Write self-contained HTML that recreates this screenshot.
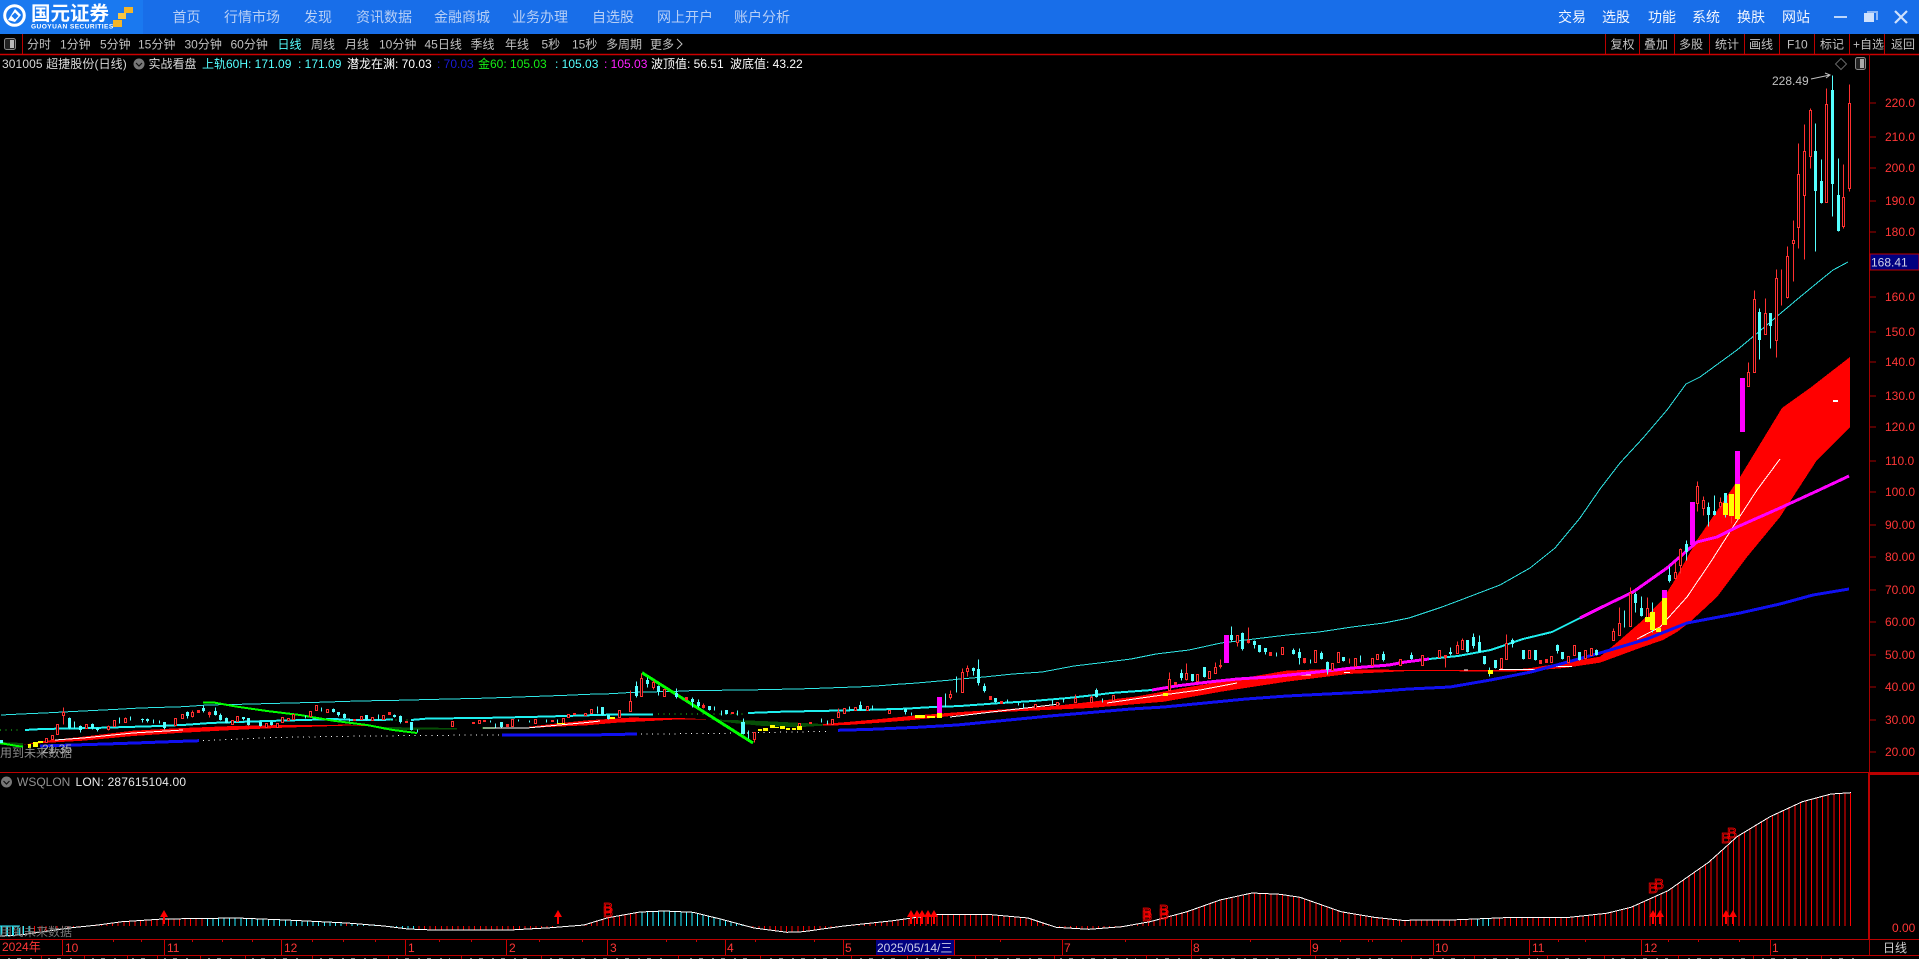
<!DOCTYPE html>
<html lang="zh-CN">
<head>
<meta charset="utf-8">
<title>国元证券</title>
<style>
html,body{margin:0;padding:0;background:#000;width:1919px;height:959px;overflow:hidden}
svg{display:block;position:absolute;left:0;top:0;font-family:"Liberation Sans","Noto Sans CJK SC",sans-serif;font-size:12px}
.m{font-size:14px;fill:#b7cff6}
.r{font-size:14px;fill:#f2f6fe}
.t{fill:#c0c0c0}
.a{fill:#ff3636}
.w{fill:#fff}
polyline,.cr{shape-rendering:crispEdges}
</style>
</head>
<body>
<svg width="1919" height="959" viewBox="0 0 1919 959" xmlns="http://www.w3.org/2000/svg">
<defs>
<clipPath id="hp"><path d="M0 936L20 935 41 932 69 928 98 925 122 921.7 163 919 237 918 286 920 347 923 384 926 408 929 433 930 510 930 551 927.7 584 925 608 917.7 640 912 664.5 911 693 912.3 721.6 919.3 754 928 787 932.3 803 931.7 844 926 893 920.7 938 914.3 987 914.3 1028 918 1056 927.3 1089 929.3 1122 926.7 1150 921.7 1187 911.7 1220 900 1252 893 1280 894.3 1300 897.3 1341 911.7 1374 917.3 1402 920.3 1451 920 1504.5 917.7 1566 917.7 1606.5 913.3 1631 907.3 1668 890.7 1708.6 862.3 1737 836.7 1770 816.7 1802.4 801.7 1831 794 1851 792.7V926H0z"/></clipPath>
<clipPath id="c1"><path d="M0 780H30V940H0zM204 780H345V940H204zM347 780H416V940H347zM640 780H752V940H640zM1474 780H1491V940H1474z"/></clipPath>
<path id="ar" fill="#f00" d="M-4 917L0 910 4 917H1V924H-1V917z"/>
</defs>

<!-- top bar -->
<rect width="1919" height="34" fill="#186ee9"/>
<rect width="143" height="34" fill="#1a79f0"/>
<circle cx="14.5" cy="15.5" r="9.8" fill="none" stroke="#fff" stroke-width="3"/>
<path d="M8 20L15 9 21 15 15 22z" fill="#fff"/>
<path d="M11.5 16l3.5-3.5 3.5 3.5-3.5 3.5z" fill="#1a79f0"/>
<text x="31" y="20" font-size="19.5" font-weight="700" fill="#fff">国元证券</text>
<text x="31" y="28.5" font-size="6.6" font-weight="700" fill="#fff" letter-spacing=".42">GUOYUAN SECURITIES</text>
<path d="M113 20h9v7h-9z" fill="#f4b528"/><path d="M118 13h8v6h-8z" fill="#f7c544"/><path d="M124 7h9v6h-9z" fill="#f4b528"/>
<text class="m" x="172.5" y="22">首页</text>
<text class="m" x="224" y="22">行情市场</text>
<text class="m" x="304" y="22">发现</text>
<text class="m" x="356" y="22">资讯数据</text>
<text class="m" x="434" y="22">金融商城</text>
<text class="m" x="512" y="22">业务办理</text>
<text class="m" x="592" y="22">自选股</text>
<text class="m" x="657" y="22">网上开户</text>
<text class="m" x="734" y="22">账户分析</text>
<text class="r" x="1558" y="22">交易</text>
<text class="r" x="1602" y="22">选股</text>
<text class="r" x="1648" y="22">功能</text>
<text class="r" x="1692" y="22">系统</text>
<text class="r" x="1737" y="22">换肤</text>
<text class="r" x="1782" y="22">网站</text>
<path d="M1834 16h13v2h-13z" fill="#bcd6fb"/>
<path d="M1864 13h10v9h-10z" fill="#cfe1fc"/><path d="M1867 11h11v9h-2v-7h-9z" fill="#8fb8f5"/>
<path d="M1895 11l12 12M1907 11l-12 12" stroke="#cfe1fc" stroke-width="2.2" fill="none"/>

<!-- toolbar -->
<g class="t">
<text x="27" y="48.5">分时</text><text x="60" y="48.5">1分钟</text><text x="100" y="48.5">5分钟</text><text x="138" y="48.5">15分钟</text><text x="184.5" y="48.5">30分钟</text><text x="230.5" y="48.5">60分钟</text>
<text x="277.5" y="48.5" style="fill:#55ffff">日线</text>
<text x="311" y="48.5">周线</text><text x="345" y="48.5">月线</text><text x="379" y="48.5">10分钟</text><text x="424.5" y="48.5">45日线</text><text x="470.5" y="48.5">季线</text><text x="505" y="48.5">年线</text><text x="541.5" y="48.5">5秒</text><text x="572" y="48.5">15秒</text><text x="606" y="48.5">多周期</text><text x="650" y="48.5">更多</text>
<text x="1610.5" y="48.5">复权</text><text x="1644" y="48.5">叠加</text><text x="1679" y="48.5">多股</text><text x="1715" y="48.5">统计</text><text x="1749" y="48.5">画线</text><text x="1787" y="48.5">F10</text><text x="1820" y="48.5">标记</text><text x="1853" y="48.5">+自选</text><text x="1891" y="48.5">返回</text>
</g>
<path d="M677 39l5 5-5 5" fill="none" stroke="#c0c0c0"/>
<rect x="4.5" y="38.5" width="11" height="11" rx="2" fill="#222" stroke="#888"/><rect x="10" y="40" width="4" height="8" fill="#bbb"/>
<path d="M22.5 34V54M1605.5 34V54M1639.5 34V54M1674.5 34V54M1709.5 34V54M1744.5 34V54M1779.5 34V54M1814.5 34V54M1849.5 34V54M1884.5 34V54" stroke="#b00" fill="none"/>
<path d="M0 54.5H1919" stroke="#c00" stroke-width="1.5"/>

<!-- info line -->
<text x="2" y="68" fill="#d8d8d8" letter-spacing=".1">301005 超捷股份(日线)</text>
<circle cx="139" cy="64" r="5.5" fill="#777"/><path d="M136 63l3 3 3-3" fill="none" stroke="#111" stroke-width="1.2"/>
<text x="148.5" y="68" fill="#d8d8d8">实战看盘</text>
<text x="202" y="68" fill="#55ffff">上轨60H: 171.09</text><text x="298" y="68" fill="#55ffff">: 171.09</text>
<text x="347" y="68" fill="#fff">潜龙在渊: 70.03</text><text x="437" y="68" fill="#1a1ad8">: 70.03</text>
<text x="478" y="68" fill="#16ee16">金60: 105.03</text><text x="555" y="68" fill="#55ffff">: 105.03</text><text x="604" y="68" fill="#ff22ff">: 105.03</text>
<text x="651" y="68" fill="#fff">波顶值: 56.51</text><text x="730" y="68" fill="#fff">波底值: 43.22</text>
<path d="M1841 58.5l5.5 5.5-5.5 5.5-5.5-5.5z" fill="none" stroke="#666"/>
<rect x="1855.5" y="57.5" width="10" height="12" rx="2" fill="#222" stroke="#888"/><rect x="1860" y="59" width="4" height="9" fill="#aaa"/>

<!-- axis frame -->
<path d="M1869.5 54V956" stroke="#a80000" fill="none"/>
<path d="M1869 773V940" stroke="#b00" stroke-width="2" fill="none"/>
<path d="M0 772.5H1919" stroke="#b00" fill="none"/>
<path d="M1869 774H1919" stroke="#b00" stroke-width="2" fill="none"/>
<path d="M0 939.5H1919M0 955.5H1919" stroke="#b00" fill="none"/>
<path d="M1870 103h6M1870 137h6M1870 168h6M1870 201h6M1870 232h6M1870 297h6M1870 332h6M1870 362h6M1870 396h6M1870 427h6M1870 461h6M1870 492h6M1870 525h6M1870 557h6M1870 590h6M1870 622h6M1870 655h6M1870 687h6M1870 720h6M1870 752h6" stroke="#a80000" fill="none"/>
<g class="a">
<text x="1885" y="107">220.0</text><text x="1885" y="141">210.0</text><text x="1885" y="172">200.0</text><text x="1885" y="205">190.0</text><text x="1885" y="236">180.0</text><text x="1885" y="301">160.0</text><text x="1885" y="336">150.0</text><text x="1885" y="366">140.0</text><text x="1885" y="400">130.0</text><text x="1885" y="431">120.0</text><text x="1885" y="465">110.0</text><text x="1885" y="496">100.0</text><text x="1885" y="529">90.00</text><text x="1885" y="561">80.00</text><text x="1885" y="594">70.00</text><text x="1885" y="626">60.00</text><text x="1885" y="659">50.00</text><text x="1885" y="691">40.00</text><text x="1885" y="724">30.00</text><text x="1885" y="756">20.00</text>
<text x="1892" y="932">0.00</text>
</g>
<rect x="1870" y="254" width="49" height="16" fill="#000080" stroke="#b00"/>
<text x="1871" y="266.5" fill="#d0d0e8">168.41</text>

<!-- bands -->
<path class="cr" fill="#f00" d="M23 745L43 741 83 736.7 133 730.7 183 728 233 726 283 725 350 724.7 380 726.3 350 725.5 283 727.7 233 730 183 732.7 133 736 83 740.7 43 743z"/>
<path class="cr" fill="#f00" d="M527 727L543 725 587 720.3 630 717.7 680 718 707 719.3 680 719.3 650 721 617 722.7 587 725.3 543 727.3z"/>
<path class="cr" fill="#f00" d="M823 724L847 722 880 719 913 715.7 960 712 1001 709.5 1054 706 1135 696.7 1189 687 1237 679 1286.5 670.7 1327 669 1409 670 1510 670 1531 668 1600 656.7 1620 640 1643 620 1662 600 1673 583 1697 540 1740 477 1782 408 1810 388 1850 357V427L1817 460 1780 517 1747 557 1717 597 1690 622 1677 632 1663 640 1640 648 1600 662.7 1564 668 1531 670.7 1510 671.5 1409 671 1348 674 1286.5 681.7 1221 691.7 1164 701.7 1090 708 1001 712 960 715 913 720 880 722.7 847 725 823 725.7z"/>
<path class="cr" fill="#064f06" d="M707 719.3L763 721 823 724V725.7L797 727.3 763 726 733 723zM383 727L457 728V729.5L383 730zM0 742L23 743V746L0 745zM482 727L495 727V729L482 729z"/>

<!-- white inner lines -->
<path class="cr" fill="none" stroke="#fff" d="M55 740L83 738 133 733 183 730M483 728H527L543 726.5 587 722.5 600 721M1107 703L1155 696 1200 690 1237 683M1295 675H1311M1344 672.7H1350M1464 670H1468M1499 669.6H1535M1550 666.7H1572M1637 639L1660 627 1687 597 1710 563 1733 527 1757 490 1780 459M950 717L1000 711 1060 704"/>

<!-- thin upper cyan -->
<polyline fill="none" stroke="#2fe6e6" points="1,715 21,714 44,713 77,711.3 117,709.3 140,708 183,706.7 207,705 240,704.3 278,703.3 318,702.3 358,701 397,700.3 437,699.3 480,698.3 510,697.3 538,696.3 566,695.3 588,694.3 611,693.7 633,692.3 655,691.8 677,691.3 690,690.7 762,689.7 807,688.7 835,687.7 863,686.7 880,685.7 897,684.3 913,683.3 925,682.3 936,681.3 948,680.3 960,679 984,677 1013,674 1042,672 1074,666 1099,663 1131,659 1156,654 1189,650 1221,643 1254,639 1287,635 1319,632 1352,627 1384,623 1409,618 1442,607 1458,601 1500,585 1530,568 1555,548 1580,518 1600,489 1620,463 1643,438 1667,410 1686,384 1700,377 1737,350 1767,325 1775,318 1800,297 1817,283 1833,270 1848,262"/>

<!-- thick cyan -->
<g fill="none" stroke="#1ff0f0" stroke-width="2">
<polyline points="25,730 42,729 93,728 127,727 160,726 187,724.7 210,723 237,722 267,721 305,720 333,719 355,720 393,719.7"/>
<polyline points="411,720 428,718.5 480,718 495,717.7 540,716.7 575,715.7 608,714.7 653,714.7"/>
<polyline points="748,713 782,711.7 832,710.7 872,709.7 905,708.7 928,707.3 960,706 1001,703 1033,701 1068,698 1095,695 1111,693 1152,690"/>
<polyline points="1429,659 1458,656 1490.6,650 1523,639 1552,632 1580,618"/>
</g>
<!-- magenta -->
<g fill="none" stroke="#f0f" stroke-width="3">
<polyline points="1152,690 1176,686 1209,682 1237.5,679 1270,677 1299,674 1327,671 1352,668 1389,665 1405,662 1429,659"/>
<polyline points="1580,618 1600,608 1633,592 1667,568 1697,542 1717,537 1737,527 1780,508 1817,491 1849,476"/>
</g>
<!-- blue -->
<g fill="none" stroke="#1010f0" stroke-width="3">
<polyline points="40,746 87,744.6 115,743.7 143,742.7 170,741.7 199,740.7"/>
<polyline points="502,735 590,735 637,734"/>
<polyline points="838,730.3 872,729.3 895,728.3 917,727.3 940,726 957,725 1050,716 1131,709 1164,707 1205,703 1246,699 1287,696 1327,694 1368,692 1409,689 1450,687 1490.6,680 1531,672 1564,663 1600,653 1647,639 1687,623 1740,613 1780,604 1813,595 1849,589"/>
</g>
<!-- dots -->
<g fill="none" stroke-dasharray="1 4.57" stroke-width="1">
<polyline stroke="#fff" points="203,740.7 260,738 300,737 367,736 477,735 500,735"/>
<polyline stroke="#fff" points="641,734 713,733.5 830,731.3"/>
<path class="cr" stroke="#1ee01e" d="M0 730H22M390 720H408M658 714H745"/>
</g>
<!-- green -->
<g fill="none" stroke="#0f0" stroke-width="2">
<polyline points="0,743 17,746 23,746.7"/>
<polyline points="203,702.3 215,702.7 237,706.7 267,711 300,715 333,720.7 367,725 393,730 417,733"/>
<polyline stroke-width="3" points="642,672.7 753,743"/>
</g>

<!-- candles: wicks -->
<g transform="translate(.5 .5)" fill="none" class="cr">
<path stroke="#ff3030" d="M63 707V724M108 725V730M125 717V722M192 710V717M209 711V717M512 719V726M630 690V711M641 673V696M653 680V689M664 689V696M686 697V700M703 703V708M754 732V742M838 708V717M950 690V699M962 668V692M967 665V676M1075 694V702M1091 695V702M1169 672V690M1186 663V680M1215 662V673M1220 659V668M1237 635V646M1248 627V643M1304 658V663M1315 650V662M1349 658V663M1445 655V667M1457 641V653M1462 638V649M1506 634V659M1574 645V655M1591 648V655M1613 628V640M1619 607V635M1630 587V626M1647 597V622M1675 562V578M1680 548V573M1697 481V511M1703 496V515M1720 497V508M1731 516V523M1748 362V386M1754 290V372M1765 298V334M1776 269V357M1781 269V305M1787 246V298M1793 220V281M1798 143V248M1804 124V259M1810 108V168M1826 88V202M1843 164V228M1849 84V191"/>
<path fill="#000" stroke="#ff3030" d="M45 738h2V742h-2zM51 735h2V739h-2zM56 724h2V734h-2zM62 712h2V715h-2zM85 724h2V728h-2zM107 726h2V729h-2zM113 720h2V726h-2zM124 718h2V722h-2zM174 718h2V725h-2zM181 714h2V718h-2zM191 712h2V716h-2zM231 720h2V724h-2zM236 716h2V721h-2zM265 723h2V727h-2zM276 723h2V727h-2zM281 717h2V722h-2zM287 718h2V720h-2zM292 714h2V719h-2zM309 711h2V716h-2zM315 705h2V710h-2zM326 709h2V712h-2zM360 716h2V719h-2zM371 717h2V720h-2zM382 715h2V719h-2zM451 721h2V726h-2zM478 720h2V723h-2zM511 719h2V726h-2zM534 719h2V723h-2zM562 718h2V723h-2zM567 714h2V717h-2zM584 713h2V715h-2zM590 709h2V713h-2zM618 710h2V717h-2zM629 701h2V711h-2zM640 678h2V696h-2zM652 682h2V687h-2zM663 689h2V696h-2zM753 732h2V739h-2zM798 723h2V726h-2zM831 719h2V724h-2zM837 712h2V717h-2zM843 708h2V713h-2zM854 707h2V710h-2zM866 706h2V710h-2zM888 710h2V713h-2zM949 694h2V697h-2zM961 672h2V692h-2zM966 668h2V671h-2zM1034 704h2V708h-2zM1056 702h2V705h-2zM1074 698h2V702h-2zM1090 697h2V702h-2zM1112 695h2V700h-2zM1168 679h2V690h-2zM1185 673h2V679h-2zM1196 674h2V681h-2zM1208 671h2V678h-2zM1214 667h2V673h-2zM1236 635h2V642h-2zM1281 647h2V654h-2zM1314 650h2V662h-2zM1331 663h2V670h-2zM1337 652h2V662h-2zM1354 658h2V666h-2zM1371 658h2V665h-2zM1376 654h2V659h-2zM1399 659h2V665h-2zM1421 655h2V665h-2zM1438 650h2V657h-2zM1456 645h2V653h-2zM1461 640h2V649h-2zM1500 658h2V668h-2zM1505 643h2V659h-2zM1528 650h2V658h-2zM1550 656h2V662h-2zM1567 656h2V662h-2zM1573 645h2V655h-2zM1584 650h2V658h-2zM1590 648h2V655h-2zM1612 631h2V640h-2zM1618 623h2V635h-2zM1629 593h2V626h-2zM1646 608h2V617h-2zM1674 572h2V578h-2zM1679 549h2V565h-2zM1696 486h2V503h-2zM1702 500h2V508h-2zM1719 502h2V506h-2zM1747 372h2V386h-2zM1753 299h2V372h-2zM1764 313h2V334h-2zM1775 278h2V340h-2zM1786 256h2V297h-2zM1792 240h2V243h-2zM1797 174h2V227h-2zM1803 151h2V195h-2zM1809 110h2V156h-2zM1825 104h2V202h-2zM1842 197h2V226h-2zM1848 103h2V188h-2z"/>
<path stroke="#55ffff" d="M69 717V729M74 721V728M80 725V732M92 723V729M97 727V731M119 717V723M130 716V720M142 718V722M147 718V722M153 719V723M159 720V723M164 722V729M187 711V718M203 705V712M215 707V715M220 713V720M226 717V723M243 717V720M248 718V725M260 721V726M271 721V725M305 715V718M321 707V711M333 708V712M338 712V716M344 713V718M349 718V721M366 715V720M378 714V720M394 714V717M400 715V723M411 722V730M417 729V732M490 720V722M495 723V727M501 722V727M518 719V721M529 720V722M546 719V722M557 719V723M597 706V713M602 707V715M608 715V719M636 681V697M647 677V687M658 685V695M676 688V698M692 697V707M698 699V707M709 706V710M714 706V710M721 710V715M726 710V714M737 710V715M743 718V734M748 730V738M821 718V722M827 720V724M849 706V710M860 701V710M872 705V710M905 708V714M911 712V715M945 693V707M956 676V692M973 667V675M978 659V685M984 683V692M995 698V702M1007 699V703M1018 702V705M1023 703V708M1052 700V704M1063 698V702M1096 688V697M1102 698V702M1181 669V680M1192 674V681M1204 667V677M1231 626V641M1242 632V650M1254 640V648M1259 645V652M1265 648V654M1276 652V656M1293 648V654M1299 648V664M1310 659V663M1321 651V659M1327 661V674M1343 657V661M1360 655V662M1383 651V661M1411 652V659M1450 647V655M1467 640V652M1473 633V648M1479 635V652M1484 656V664M1489 667V676M1495 660V668M1512 638V647M1523 650V659M1535 650V660M1557 644V653M1562 652V659M1579 652V660M1596 649V655M1624 610V627M1635 592V612M1641 596V616M1652 602V632M1669 566V582M1686 540V560M1708 502V526M1714 495V515M1725 493V517M1759 308V359M1770 313V348M1815 123V251M1821 159V203M1832 75V216M1838 158V231"/>
</g>
<path class="cr" fill="#ff2a2a" d="M197 710h3v3h-3zM208 712h3v3h-3zM353 719h3v2h-3zM388 712h3v3h-3zM405 721h3v2h-3zM472 722h3v2h-3zM483 720h3v2h-3zM506 724h3v3h-3zM551 720h3v2h-3zM573 713h3v2h-3zM685 697h3v3h-3zM702 705h3v3h-3zM731 712h3v2h-3zM809 722h3v2h-3zM989 696h3v4h-3zM1000 701h3v3h-3zM1174 682h3v3h-3zM1219 665h3v2h-3zM1247 640h3v3h-3zM1269 652h3v4h-3zM1303 658h3v5h-3zM1444 655h3v3h-3zM1545 659h3v4h-3zM1539 660h3v4h-3z"/>
<path class="cr" fill="#55ffff" d="M0 740h3v3h-3zM68 718h3v10h-3zM79 726h3v4h-3zM91 724h3v4h-3zM96 728h3v2h-3zM141 719h3v1h-3zM146 719h3v2h-3zM163 722h3v6h-3zM186 712h3v4h-3zM202 708h3v3h-3zM214 711h3v4h-3zM219 715h3v5h-3zM225 718h3v5h-3zM242 717h3v2h-3zM247 718h3v7h-3zM259 722h3v4h-3zM270 722h3v3h-3zM332 709h3v3h-3zM337 712h3v3h-3zM343 714h3v4h-3zM365 715h3v5h-3zM393 715h3v2h-3zM399 716h3v6h-3zM410 722h3v8h-3zM500 722h3v5h-3zM601 707h3v8h-3zM607 715h3v4h-3zM635 686h3v10h-3zM646 680h3v4h-3zM657 686h3v6h-3zM675 693h3v4h-3zM691 699h3v3h-3zM697 702h3v4h-3zM708 706h3v4h-3zM725 710h3v4h-3zM741 722h4v12h-4zM859 705h3v5h-3zM904 709h3v3h-3zM972 668h3v3h-3zM977 669h3v14h-3zM983 686h3v5h-3zM994 698h3v4h-3zM1095 690h3v7h-3zM1180 673h3v5h-3zM1191 674h3v7h-3zM1203 667h3v10h-3zM1230 635h3v5h-3zM1241 633h3v16h-3zM1253 641h3v4h-3zM1258 645h3v7h-3zM1264 648h3v4h-3zM1292 650h3v4h-3zM1298 652h3v6h-3zM1320 653h3v6h-3zM1326 662h3v8h-3zM1342 657h3v4h-3zM1382 654h3v6h-3zM1410 655h3v4h-3zM1449 652h3v2h-3zM1466 640h3v12h-3zM1472 637h3v9h-3zM1478 642h3v10h-3zM1483 656h3v8h-3zM1494 660h3v8h-3zM1511 640h3v4h-3zM1522 650h3v9h-3zM1534 650h3v10h-3zM1556 645h3v6h-3zM1561 652h3v7h-3zM1578 652h3v8h-3zM1595 650h3v5h-3zM1634 594h3v9h-3zM1640 608h3v8h-3zM1668 575h3v6h-3zM1685 544h3v8h-3zM1707 507h3v8h-3zM1713 511h3v4h-3zM1724 493h3v12h-3zM1758 312h3v28h-3zM1769 313h3v13h-3zM1814 151h3v40h-3zM1820 181h3v22h-3zM1831 90h3v94h-3zM1837 195h3v36h-3z"/>
<!-- yellow / magenta -->
<path class="cr" fill="#ffff00" d="M28 744h3v4h-3zM33 742h5v5h-5zM38 741h5v2h-5zM557 723h8v1h-8zM610 717h5v2h-5zM758 729h4v2h-4zM763 728h5v3h-5zM770 725h5v3h-5zM775 727h4v1h-4zM780 726h5v3h-5zM786 728h4v2h-4zM792 728h4v2h-4zM797 726h5v4h-5zM915 715h10v3h-10zM927 716h8v2h-8zM937 713h5v5h-5zM1163 693h5v3h-5zM1488 670h5v4h-5zM1645 617h5v5h-5zM1650 612h5v18h-5zM1656 628h5v4h-5zM1662 598h5v27h-5zM1723 503h5v12h-5zM1729 494h5v22h-5zM1735 484h5v35h-5z"/>
<path class="cr" fill="#ff00ff" d="M937 697h5v16h-5zM1224 635h5v28h-5zM1662 590h5v8h-5zM1690 502h5v43h-5zM1735 451h5v33h-5zM1740 378h5v54h-5z"/>
<path class="cr" fill="#fff" d="M1833 400h5v2h-5z"/>

<!-- high label -->
<text x="1772" y="85" fill="#c0c0c0">228.49</text>
<path d="M1811 79L1830 75M1825 73l5 2-4 3" fill="none" stroke="#c0c0c0"/>

<!-- upper overlay text -->
<text x="0" y="757" fill="#8a8a8a">用到未来数据</text>
<text x="42" y="753" fill="#b0b0b0">21.35</text>

<!-- lower panel -->
<circle cx="6.5" cy="782" r="5.5" fill="#777"/><path d="M3.5 781l3 3 3-3" fill="none" stroke="#111" stroke-width="1.2"/>
<text x="17" y="786" fill="#909090">WSQLON</text>
<text x="75.5" y="786" fill="#e8e8e8" letter-spacing=".15">LON: 287615104.00</text>

<g clip-path="url(#hp)"><path d="M.74 860H1852" stroke="#f00" stroke-width="150" stroke-dasharray="1 4.57" fill="none" shape-rendering="crispEdges"/></g>
<g clip-path="url(#c1)"><g clip-path="url(#hp)"><path d="M.74 860H1852" stroke="#2ef" stroke-width="150" stroke-dasharray="1 4.57" fill="none" shape-rendering="crispEdges"/></g></g>
<polyline fill="none" stroke="#fff" points="0,936 20,935 41,932 69,928 98,925 122,921.7 163,919 237,918 286,920 347,923 384,926 408,929 433,930 510,930 551,927.7 584,925 608,917.7 640,912 664.5,911 693,912.3 721.6,919.3 754,928 787,932.3 803,931.7 844,926 893,920.7 938,914.3 987,914.3 1028,918 1056,927.3 1089,929.3 1122,926.7 1150,921.7 1187,911.7 1220,900 1252,893 1280,894.3 1300,897.3 1341,911.7 1374,917.3 1402,920.3 1451,920 1504.5,917.7 1566,917.7 1606.5,913.3 1631,907.3 1668,890.7 1708.6,862.3 1737,836.7 1770,816.7 1802.4,801.7 1831,794 1851,792.7"/>
<use href="#ar" x="164"/><use href="#ar" x="558"/><use href="#ar" x="911"/><use href="#ar" x="917"/><use href="#ar" x="922"/><use href="#ar" x="928"/><use href="#ar" x="934"/><use href="#ar" x="1653"/><use href="#ar" x="1660"/><use href="#ar" x="1726"/><use href="#ar" x="1733"/>
<g fill="none" stroke="#f00" font-size="15" stroke-width=".8">
<text x="603" y="917">B</text><text x="603" y="913">B</text>
<text x="1142" y="918">B</text><text x="1142" y="921">B</text>
<text x="1159" y="915">B</text><text x="1159" y="919">B</text>
<text x="1648" y="893">B</text><text x="1654" y="889">B</text>
<text x="1721" y="843">B</text><text x="1727" y="838">B</text>
</g>
<path class="cr" d="M1.5 926V936M7.5 926V936M13.5 926V936M19.5 928V935" stroke="#2ef" fill="none"/>
<path class="cr" d="M0 926H20" stroke="#2ef" fill="none"/>
<text x="0" y="936" fill="#777">用到未来数据</text>

<!-- time axis -->
<path d="M62.5 940V955M164.5 940V955M281.5 940V955M405.5 940V955M506.5 940V955M607.5 940V955M725.5 940V955M843.5 940V955M954.5 940V955M1062.5 940V955M1191.5 940V955M1310.5 940V955M1433.5 940V955M1529.5 940V955M1641.5 940V955M1770.5 940V955" stroke="#c00" fill="none"/>
<path d="M113.5 940v2M141.5 940v2M192.5 940v2M222.5 940v2M252.5 940v2M312.5 940v2M343.5 940v2M375.5 940v2M439.5 940v2M471.5 940v2M539.5 940v2M582.5 940v2M666.5 940v2M696.5 940v2M755.5 940v2M814.5 940v2M1000.5 940v2M1125.5 940v2M1250.5 940v2M1368.5 940v2M1340.5 940v2M1372.5 940v2M1401.5 940v2M1558.5 940v2M1585.5 940v2M1668.5 940v2M1698.5 940v2M1739.5 940v2" stroke="#c00" fill="none"/>
<g class="a">
<text x="2" y="951">2024年</text>
<text x="65" y="952">10</text><text x="167" y="952">11</text><text x="284" y="952">12</text><text x="408" y="952">1</text><text x="509" y="952">2</text><text x="610" y="952">3</text><text x="727" y="952">4</text><text x="845" y="952">5</text><text x="1064" y="952">7</text><text x="1193" y="952">8</text><text x="1312" y="952">9</text><text x="1435" y="952">10</text><text x="1532" y="952">11</text><text x="1644" y="952">12</text><text x="1772" y="952">1</text>
</g>
<rect x="876" y="940" width="78" height="15" fill="#000080"/>
<text x="877" y="952" fill="#d0d0e8">2025/05/14/三</text>
<text x="1883" y="952" fill="#cfcfcf">日线</text>

<!-- clipped bottom tab row -->
<path class="cr" d="M41.5 956V959M84.5 956V959M127.5 956V959M157.5 956V959M200.5 956V959M245.5 956V959M312.5 956V959M388.5 956V959M461.5 956V959M541.5 956V959M678.5 956V959M760.5 956V959M851.5 956V959M907.5 956V959M975.5 956V959M1054.5 956V959M1146.5 956V959M1191.5 956V959M1315.5 956V959M1411.5 956V959M1474.5 956V959M1547.5 956V959M1604.5 956V959M1678.5 956V959M1753.5 956V959M1821.5 956V959" stroke="#b00" fill="none"/>
<path class="cr" d="M8 958.5H36M48 958.5H76M92 958.5H120M132 958.5H152M164 958.5H192M208 958.5H238M252 958.5H300M320 958.5H378M396 958.5H450M470 958.5H530M550 958.5H668M690 958.5H750M770 958.5H840M860 958.5H900M916 958.5H965M985 958.5H1044M1060 958.5H1136M1156 958.5H1184M1200 958.5H1305M1325 958.5H1400M1420 958.5H1465M1484 958.5H1538M1556 958.5H1596M1612 958.5H1668M1688 958.5H1745M1762 958.5H1812M1830 958.5H1860" stroke="#888" stroke-dasharray="2 7 4 9" fill="none"/>
</svg>
</body>
</html>
